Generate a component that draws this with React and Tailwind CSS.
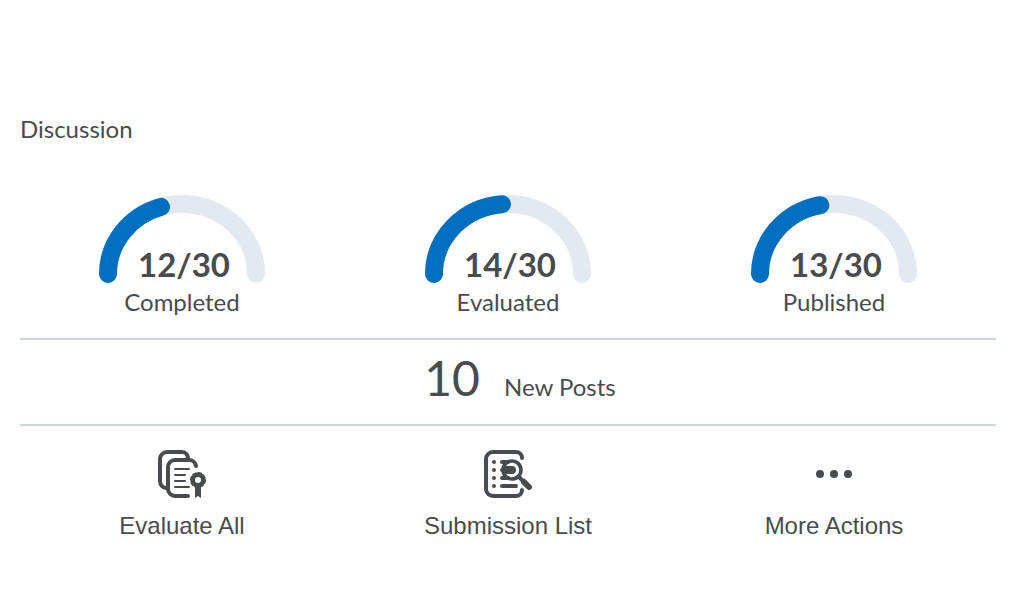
const METERS = [
  { label: "Completed", value: 12, max: 30 },
  { label: "Evaluated", value: 14, max: 30 },
  { label: "Published", value: 13, max: 30 },
];

const ARC = "M10 80a74 70 0 0 1 148 0";
const ARC_LENGTH = 229;

function Meter({ label, value, max }) {
  return (
    <div className="flex flex-col items-center">
      <div className="grid justify-items-center">
        <svg
          className="col-start-1 row-start-1 h-[92px] w-[168px]"
          viewBox="0 0 168 92"
          fill="none"
          strokeWidth="18"
          strokeLinecap="round"
          aria-hidden="true"
        >
          <path d={ARC} stroke="#e3e9f1" />
          <path d={ARC} stroke="#006fbf" strokeDasharray={`${(value / max) * ARC_LENGTH} 600`} />
        </svg>
        <span className="col-start-1 row-start-1 self-end pl-1 text-[33px] leading-[44px] font-bold">
          {value}/{max}
        </span>
      </div>
      <span className="text-2xl">{label}</span>
    </div>
  );
}

function EvaluateIcon() {
  return (
    <svg className="size-12" viewBox="0 0 48 48" fill="none" stroke="currentColor" strokeWidth="4" strokeLinecap="round" aria-hidden="true">
      <path d="M9 38C5 38 2 35 2 31V9a7 7 0 0 1 7-7h15c4 0 6 3 6 7" />
      <path d="M30 46H17a7 7 0 0 1-7-7V17a7 7 0 0 1 7-7h14a7 7 0 0 1 7 6" />
      <path d="M17 19h14M17 25h10M17 31h10M17 37h14" strokeWidth="2" />
      <circle cx="40" cy="30" r="5.3" strokeWidth="4.6" />
      <circle cx="40" cy="30" r="7.2" strokeWidth="1.6" strokeDasharray="3.2 2.45" />
      <path d="M37 36h6v12l-3-2-3 2z" fill="currentColor" stroke="none" />
    </svg>
  );
}

function SubmissionIcon() {
  return (
    <svg className="size-12" viewBox="0 0 48 48" fill="none" stroke="currentColor" strokeWidth="4" strokeLinecap="round" aria-hidden="true">
      <path d="M38 8a6 6 0 0 0-6-6H9a7 7 0 0 0-7 7v30a7 7 0 0 0 7 7h23a6 6 0 0 0 6-6" />
      <path d="M18 12h6M18 20h6M18 28h6M18 36h14" />
      <path d="M10 12h.01M10 20h.01M10 28h.01M10 36h.01" />
      <circle cx="28" cy="20" r="9" strokeWidth="3.6" />
      <path d="M22 20h6" strokeWidth="8" />
      <path d="M35 27l4 4" strokeWidth="4" />
      <path d="M40 32l5 5" strokeWidth="6" />
    </svg>
  );
}

function MoreIcon() {
  return (
    <svg className="size-12" viewBox="0 0 48 48" fill="currentColor" aria-hidden="true">
      <circle cx="10" cy="24" r="4" />
      <circle cx="24" cy="24" r="4" />
      <circle cx="38" cy="24" r="4" />
    </svg>
  );
}

const ACTIONS = [
  { label: "Evaluate All", Icon: EvaluateIcon },
  { label: "Submission List", Icon: SubmissionIcon },
  { label: "More Actions", Icon: MoreIcon },
];

export default function App() {
  return (
    <main className="bg-white px-5 pt-[113px] font-['Lato',sans-serif] text-[#494c4e]">
      <h2 className="text-2xl">Discussion</h2>
      <section className="grid grid-cols-3 gap-x-0.5 pt-[49px] pb-5">
        {METERS.map((m) => (
          <Meter key={m.label} {...m} />
        ))}
      </section>
      <section className="flex items-baseline justify-center gap-6 border-y-2 border-[#cdd5dc] pt-1 pb-3 pl-6">
        <span className="text-5xl leading-[68px]">10</span>
        <span className="text-2xl">New Posts</span>
      </section>
      <section className="grid grid-cols-3 gap-x-0.5 pt-6">
        {ACTIONS.map(({ label, Icon }) => (
          <button
            key={label}
            type="button"
            className="flex cursor-pointer flex-col items-center gap-3 font-['Liberation_Sans',sans-serif] text-2xl"
          >
            <Icon />
            {label}
          </button>
        ))}
      </section>
    </main>
  );
}
